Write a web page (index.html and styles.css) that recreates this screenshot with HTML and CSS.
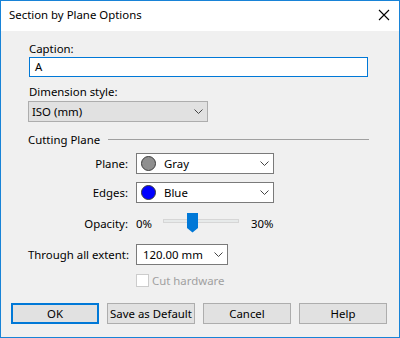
FILE: index.html
```html
<!DOCTYPE html>
<html lang="en">
<head>
    <meta charset="UTF-8">
    <title>Section by Plane Options</title>
    <link rel="stylesheet" href="styles.css">
</head>
<body>
    <div class="dialog">
        <div class="titlebar">
            <span class="title">Section by Plane Options</span>
            <svg class="close" width="12" height="12" viewBox="0 0 12 12">
                <path d="M1 1 L11 11 M11 1 L1 11" stroke="#000" stroke-width="1.1" fill="none"/>
            </svg>
        </div>

        <div class="content">
            <div class="field-label">Caption:</div>
            <div class="textbox">A</div>

            <div class="field-label dim-label">Dimension style:</div>
            <div class="combo combo-flat">
                <span>ISO (mm)</span>
                <svg class="chevron" width="9" height="5" viewBox="0 0 9 5"><path d="M0.5 0.5 L4.5 4.5 L8.5 0.5" stroke="#444" fill="none"/></svg>
            </div>

            <div class="group-head">
                <span>Cutting Plane</span>
                <div class="rule"></div>
            </div>

            <div class="form">
                <div class="row">
                    <span class="row-label">Plane:</span>
                    <div class="combo color-combo">
                        <span class="swatch gray"></span>
                        <span class="swatch-name">Gray</span>
                        <svg class="chevron" width="9" height="5" viewBox="0 0 9 5"><path d="M0.5 0.5 L4.5 4.5 L8.5 0.5" stroke="#444" fill="none"/></svg>
                    </div>
                </div>
                <div class="row">
                    <span class="row-label">Edges:</span>
                    <div class="combo color-combo">
                        <span class="swatch blue"></span>
                        <span class="swatch-name">Blue</span>
                        <svg class="chevron" width="9" height="5" viewBox="0 0 9 5"><path d="M0.5 0.5 L4.5 4.5 L8.5 0.5" stroke="#444" fill="none"/></svg>
                    </div>
                </div>
                <div class="row opacity-row">
                    <span class="row-label">Opacity:</span>
                    <span class="min-val">0%</span>
                    <svg class="slider" width="76" height="20" viewBox="0 0 76 20">
                        <rect x="0.5" y="6.5" width="75" height="3" fill="#e7eaea" stroke="#d6d6d6"/>
                        <path d="M24 0 H35 V15 L29.5 19.5 L24 15 Z" fill="#0078d7"/>
                    </svg>
                    <span class="max-val">30%</span>
                </div>
                <div class="row through-row">
                    <span class="row-label">Through all extent:</span>
                    <div class="combo extent-combo">
                        <span>120.00 mm</span>
                        <svg class="chevron" width="9" height="5" viewBox="0 0 9 5"><path d="M0.5 0.5 L4.5 4.5 L8.5 0.5" stroke="#444" fill="none"/></svg>
                    </div>
                </div>
                <div class="row check-row">
                    <span class="row-label"></span>
                    <span class="check"></span>
                    <span class="check-label">Cut hardware</span>
                </div>
            </div>
        </div>

        <div class="buttons">
            <button class="btn btn-default">OK</button>
            <button class="btn">Save as Default</button>
            <button class="btn">Cancel</button>
            <button class="btn">Help</button>
        </div>
    </div>
</body>
</html>
```

FILE: styles.css
```css
/* General styles */
body {
    margin: 0;
    font-family: "Noto Sans", "Open Sans", sans-serif;
    font-size: 11.4px;
    line-height: 15px;
    color: #000;
}

/* Window frame */
.dialog {
    width: 400px;
    height: 338px;
    box-sizing: border-box;
    border: 1px solid #1883d7;
    background: #f0f0f0;
}

.titlebar {
    height: 30px;
    box-sizing: border-box;
    background: #fff;
    display: flex;
    justify-content: space-between;
    align-items: flex-start;
    padding: 6px 9px 0 8px;
}

.close {
    margin-top: 2px;
}

/* Form area */
.content {
    padding: 10px 0 0 28px;
}

.textbox {
    margin-top: 1px;
    width: 339px;
    height: 20px;
    box-sizing: border-box;
    border: 1px solid #0078d7;
    background: #fff;
    padding-left: 5px;
    line-height: 18px;
}

.dim-label {
    margin-top: 7px;
}

.combo {
    display: flex;
    align-items: center;
    height: 21px;
    box-sizing: border-box;
    border: 1px solid #7a7a7a;
    background: #fff;
    padding: 0 4px 0 6px;
    white-space: nowrap;
}

.combo .chevron {
    margin-left: auto;
}

.combo-flat {
    margin: 2px 0 0 -1px;
    width: 180px;
    background: #e1e1e1;
    border-color: #adadad;
    padding-left: 3px;
}

/* Group heading with rule */
.group-head {
    display: flex;
    align-items: center;
    gap: 8px;
    margin: 10px 30px 0 -1px;
}

.rule {
    flex: 1;
    border-top: 1px solid #a0a0a0;
}

/* Labelled rows */
.form {
    margin: 6px 0 0 -1px;
}

.row {
    display: flex;
    align-items: center;
    white-space: nowrap;
}

.row + .row {
    margin-top: 8px;
}

.row-label {
    width: 100px;
    margin-right: 8px;
    text-align: right;
    flex-shrink: 0;
}

.color-combo {
    width: 138px;
    padding-left: 4px;
}

.swatch {
    width: 15px;
    height: 15px;
    box-sizing: border-box;
    border: 1px solid #3c3c3c;
    border-radius: 50%;
}

.swatch.gray {
    background: #8f8f8f;
}

.swatch.blue {
    background: #0000ff;
}

.swatch-name {
    margin-left: 8px;
}

.row.opacity-row {
    margin-top: 10px;
    height: 20px;
}

.min-val {
    width: 27px;
}

.max-val {
    margin-left: 12px;
}

.row.through-row {
    margin-top: 11px;
}

.extent-combo {
    width: 92px;
}

.row.check-row {
    margin-top: 9px;
    height: 13px;
}

.check {
    width: 13px;
    height: 13px;
    box-sizing: border-box;
    border: 1px solid #cccccc;
    background: #fff;
}

.check-label {
    margin-left: 3px;
    color: #a0a0a0;
}

/* Bottom buttons */
.buttons {
    display: flex;
    gap: 8px;
    margin-top: 16px;
    padding-left: 10px;
}

.btn {
    width: 88px;
    height: 21px;
    box-sizing: border-box;
    border: 1px solid #adadad;
    background: #e1e1e1;
    font: inherit;
    color: #000;
    padding: 0;
    white-space: nowrap;
}

.btn-default {
    border: 2px solid #0078d7;
}
```
